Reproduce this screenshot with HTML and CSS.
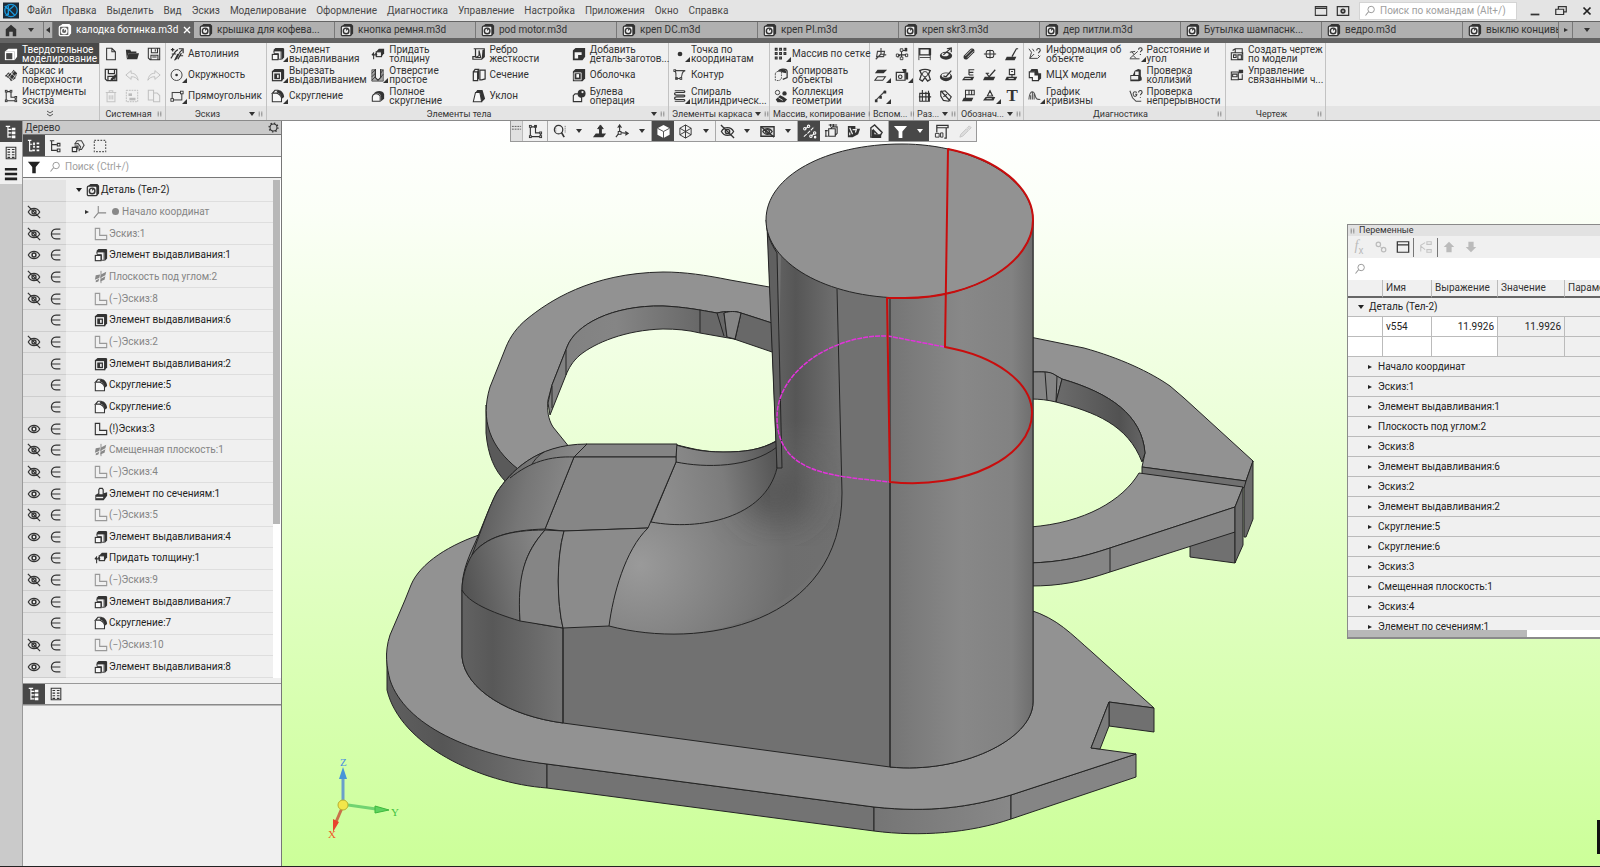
FILE: index.html
```html
<!DOCTYPE html>
<html lang="ru">
<head>
<meta charset="utf-8">
<title>калодка ботинка.m3d</title>
<link rel="stylesheet" href="styles.css">
</head>
<body>
<svg class="defs" aria-hidden="true">
<symbol id="part" viewBox="0 0 16 16"><path d="M2 4l3-3h8l2 2v9l-3 3V4z" fill="#333"/><rect x="1.500" y="3.500" width="11" height="11" rx="1.500" fill="#ececec" stroke="#333" stroke-width="1.400"/><circle cx="7" cy="9" r="3.200" fill="none" stroke="#333" stroke-width="1.600"/><path d="M7 9V6.500h2.500z" fill="#333"/></symbol>
<symbol id="partw" viewBox="0 0 16 16"><path d="M2 4l3-3h8l2 2v9l-3 3V4z" fill="#fff"/><rect x="1.500" y="3.500" width="11" height="11" rx="1.500" fill="#646464" stroke="#fff" stroke-width="1.400"/><circle cx="7" cy="9" r="3.200" fill="none" stroke="#fff" stroke-width="1.600"/><path d="M7 9V6.500h2.500z" fill="#fff"/></symbol>
<symbol id="home" viewBox="0 0 16 16"><path d="M2 15V7l6-5 6 5v8h-4v-5H6v5z" fill="#333"/></symbol>
<symbol id="solid" viewBox="0 0 16 16"><path d="M1 5l4-3h10v9l-3 4V5z" fill="#fff"/><rect x="1" y="5" width="11" height="10" fill="#fff"/><rect x="2.500" y="7" width="7" height="7" fill="#484848"/></symbol>
<symbol id="surf" viewBox="0 0 16 16"><path d="M1 9l4-4 3 1 3-4 4 4-2 6-5 3-2-3z" fill="#333"/><path d="M3 7l7 7M6 4l8 7M5 12l7-9M3 10l5-6M9 14l5-7" stroke="#efefef" stroke-width=".8" fill="none"/></symbol>
<symbol id="skt" viewBox="0 0 16 16"><path d="M2.500 3v10.500h11V9.500H8V3z" fill="none" stroke="#333" stroke-width="1.200"/><g fill="#f0f0f0" stroke="#333"><rect x="1.500" y="1.500" width="2" height="2"/><rect x="7" y="1.500" width="2" height="2"/><rect x="1.500" y="12.500" width="2" height="2"/><rect x="12.500" y="12.500" width="2" height="2"/><rect x="12.500" y="8.500" width="2" height="2"/></g></symbol>
<symbol id="new" viewBox="0 0 16 16"><path d="M3 1.500h6l4 4v9H3zM9 1.500v4h4" fill="none" stroke="#333" stroke-width="1.200"/></symbol>
<symbol id="open" viewBox="0 0 16 16"><path d="M1 3h5l1 2h6v2H4l-2 6z" fill="#333"/><path d="M4 7h12l-2 7H2z" fill="#333"/></symbol>
<symbol id="save" viewBox="0 0 16 16"><path d="M1.500 1.500h13v13h-11l-2-2zM5 1.500v5h7v-5M4.500 14.500v-5h8v5M9.500 2.500v2.500M6 11.500h5" fill="none" stroke="#333" stroke-width="1.200"/></symbol>
<symbol id="saveas" viewBox="0 0 16 16"><path d="M1.500 1.500h13v13h-11l-2-2zM5 1.500v5h7v-5M4.500 14.500v-5h8v5" fill="none" stroke="#333" stroke-width="1.400"/><path d="M7 15l1-3 5-5 2 2-5 5z" fill="#333"/></symbol>
<symbol id="undo" viewBox="0 0 16 16"><path d="M1 8l6-5v3c5 0 7 3 8 8-2-3-4-4-8-4v3z" fill="none" stroke="#bbb"/></symbol>
<symbol id="redo" viewBox="0 0 16 16"><path d="M15 8L9 3v3c-5 0-7 3-8 8 2-3 4-4 8-4v3z" fill="none" stroke="#bbb"/></symbol>
<symbol id="trash" viewBox="0 0 16 16"><path d="M2 4h12M6 4V2h4v2M3.500 4v10.500h9V4M6 7v5M8 7v5M10 7v5" fill="none" stroke="#c4c4c4" stroke-width="1.200"/></symbol>
<symbol id="selbox" viewBox="0 0 16 16"><path d="M1.500 1.500h13v13h-13z" fill="none" stroke="#b8b8b8" stroke-dasharray="2 1"/><rect x="4" y="5" width="4" height="3" fill="#bbb"/><rect x="5" y="10" width="7" height="3" fill="#bbb"/></symbol>
<symbol id="copy" viewBox="0 0 16 16"><path d="M1.500 1.500h6v11h-6zM7.500 4.500h4l3 3v7h-7z" fill="none" stroke="#c0c0c0" stroke-width="1.200"/></symbol>
<symbol id="auto" viewBox="0 0 16 16"><path d="M1 3h4M3 1v4M1 13c3-4 4-8 8-10M5 15c6-3 2-6 9-12M2 8h5M9 8l-3 6M10 2h5v5M11 10h4M9 14l4-7" fill="none" stroke="#333" stroke-width="1.400"/></symbol>
<symbol id="circ" viewBox="0 0 16 16"><circle cx="7.500" cy="8" r="6.300" fill="none" stroke="#444" stroke-width="1.100"/><circle cx="7.500" cy="8" r="1.500" fill="#333"/></symbol>
<symbol id="rect" viewBox="0 0 16 16"><rect x="2.500" y="4" width="11" height="8.500" fill="none" stroke="#444" stroke-width="1.200"/><g fill="#f0f0f0" stroke="#333"><rect x="1" y="11" width="3" height="3"/><rect x="12" y="2.500" width="3" height="3"/></g></symbol>
<symbol id="extr" viewBox="0 0 16 16"><path d="M3 6V3l2-2h9l1 1v10l-3 3V5z" fill="#333"/><path d="M3.500 7.500V4.500h8v9.500h-3v-6.500z" fill="#eee" stroke="#333"/><rect x="1.500" y="8.500" width="6.500" height="6" fill="#f8f8f8" stroke="#333" stroke-width="1.300"/></symbol>
<symbol id="cut" viewBox="0 0 16 16"><path d="M1 4l3-3h10l1 1v10l-3 3z" fill="#333"/><rect x="1.700" y="4" width="10.500" height="10.500" fill="#f0f0f0" stroke="#333" stroke-width="1.400"/><rect x="4.500" y="7" width="5" height="5" fill="#fff" stroke="#333" stroke-width="1.500"/><path d="M4.500 7h2.500v5H4.500z" fill="#333"/></symbol>
<symbol id="fil" viewBox="0 0 16 16"><path d="M1.500 5v9.500h10.500V10C11 7 9 5 5 4.500L1.500 5l3-3.500h4" fill="#f8f8f8" stroke="#333" stroke-width="1.200"/><path d="M6 4l2-3C12 1 15 5 15 9l-3 2.500C12 7.500 10 4 6 4z" fill="#333"/></symbol>
<symbol id="thick" viewBox="0 0 16 16"><path d="M6 5l3-3h6v5l-3 4z" fill="#333"/><rect x="6" y="5.500" width="6" height="5.500" fill="#eee" stroke="#333" stroke-width="1.300"/><path d="M1 9h6M3 6v8M1 9l2-2M7 9L5 7" fill="none" stroke="#333" stroke-width="1.200"/></symbol>
<symbol id="hole" viewBox="0 0 16 16"><path d="M1 2h4v9l3 3 3-3V2h3v13H1z" fill="#aaa" stroke="#555"/><path d="M5 1v10l3 3 3-3V1" fill="#f4f4f4" stroke="#333" stroke-width="1.300"/><path d="M1 6l4-4M1 10l4-4M1 14l4-4M11 6l3-4M11 11l3-4" stroke="#333"/></symbol>
<symbol id="ffil" viewBox="0 0 16 16"><path d="M1.500 14v-5C2 5 8 4 10.500 8v6z" fill="#f8f8f8" stroke="#333" stroke-width="1.200"/><path d="M3 6c2-5 11-5 12 0v5l-3.500 3V9C11 4 6 4 3 6z" fill="#333"/></symbol>
<symbol id="rib" viewBox="0 0 16 16"><path d="M2 2h12v9l-3 3H1v-3h3V2" fill="none" stroke="#333" stroke-width="1.400"/><path d="M8 4v6l-4 2h6z" fill="none" stroke="#333" stroke-width="1.200"/><path d="M12 3h2v8l-3 3z" fill="#333"/></symbol>
<symbol id="sect" viewBox="0 0 16 16"><path d="M1.500 4.500h5v10h-5zM1.500 4.500l2-3h4l-1 3M9 2.500h6v10l-4 1H9z" fill="#f4f4f4" stroke="#333" stroke-width="1.400"/><path d="M6 5l2-3v10l-2 2z" fill="#333"/></symbol>
<symbol id="draft" viewBox="0 0 16 16"><path d="M4 4l2-3h6l3 10-4 4L9 4z" fill="#333"/><path d="M1.500 14.500L4 4h5l2 10.500z" fill="#f8f8f8" stroke="#333" stroke-width="1.200"/></symbol>
<symbol id="addp" viewBox="0 0 16 16"><path d="M1 4l3-3h11v10l-3 4H1z" fill="#333"/><path d="M3 6h4v7H3zM7 6h4v3H7z" fill="#f4f4f4"/></symbol>
<symbol id="shell" viewBox="0 0 16 16"><path d="M1 4l3-3h11v11l-3 3H1z" fill="#333"/><path d="M2.500 5.500h8v8h-8z" fill="none" stroke="#eee"/><path d="M5 7h3v4H5z" fill="#fff"/></symbol>
<symbol id="bool" viewBox="0 0 16 16"><circle cx="11" cy="5" r="4.500" fill="#333"/><path d="M1.500 7.500l2-2H7c0 3 2 4 4 4v5h-9.500z" fill="#f4f4f4" stroke="#333" stroke-width="1.300"/><circle cx="12" cy="3.500" r="1.300" fill="#eee"/></symbol>
<symbol id="point" viewBox="0 0 16 16"><circle cx="8" cy="8" r="2.700" fill="#333"/></symbol>
<symbol id="cont" viewBox="0 0 16 16"><path d="M2 3h12c-5 1-3 6-5 9H4c-2-3 1-5-2-9z" fill="none" stroke="#444" stroke-width="1.200"/><g fill="#f0f0f0" stroke="#333"><rect x="1" y="2" width="2" height="2"/><rect x="3" y="11" width="2" height="2"/><rect x="8" y="11" width="2" height="2"/></g></symbol>
<symbol id="spir" viewBox="0 0 16 16"><path d="M2 2h10c2 0 2 2 0 2H4c-3 0-3 3 0 3h8c2 0 2 2 0 2H4c-3 0-3 3 0 3h8c2 0 2 2 0 2H2" fill="none" stroke="#333" stroke-width="1.400"/></symbol>
<symbol id="arr" viewBox="0 0 16 16"><g fill="none" stroke="#333" stroke-width="1.300"><path d="M1.500 1.500h2v2h-2zM6.500 1.500h2v2h-2zM11.500 1.500h2v2h-2zM1.500 6.500h2v2h-2zM6.500 6.500h2v2h-2zM11.500 6.500h2v2h-2zM1.500 11.500h2v2h-2zM6.500 11.500h2v2h-2z"/></g></symbol>
<symbol id="cpo" viewBox="0 0 16 16"><path d="M1.500 7c0-3 4-4 7-3v7c0 3-3 4-7 3z" fill="none" stroke="#444" stroke-dasharray="2 1"/><path d="M5 4c2-4 10-3 10 0v7l-5 2" fill="none" stroke="#333" stroke-width="1.400"/><path d="M6 3l4-2 4 2v3l-4-1z" fill="#333"/></symbol>
<symbol id="coll" viewBox="0 0 16 16"><circle cx="4" cy="4" r="2.500" fill="none" stroke="#333"/><circle cx="12" cy="5" r="2.500" fill="#333"/><path d="M2 12l5-5 4 2 4 3-3 3H4z" fill="#333"/><path d="M5 10l5 3" stroke="#eee"/></symbol>
<symbol id="a1" viewBox="0 0 16 16"><path d="M4 5h8l-1 6H3zM8 8V1M8 8l6 1M8 8l-6 6" fill="none" stroke="#444" stroke-width="1.300"/></symbol>
<symbol id="a2" viewBox="0 0 16 16"><path d="M7.500 14V3M2 9h12M7 4h5M3 12l3-3" fill="none" stroke="#333" stroke-width="1.200"/><path d="M11 1h3v4h-3z" fill="#333"/><path d="M1.500 8h2.500v3H1.500zM6 11.500h3v3H6zM12 8h2.500v3H12zM6 2h3v3H6z" fill="#f0f0f0" stroke="#333"/></symbol>
<symbol id="a3" viewBox="0 0 16 16"><path d="M4 2h11l-4 4H1z" fill="#333"/><path d="M4 10h9l-3 4H1z" fill="none" stroke="#333" stroke-width="1.200"/></symbol>
<symbol id="a4" viewBox="0 0 16 16"><path d="M1.500 5h10v9h-10z" fill="none" stroke="#333" stroke-width="1.400"/><circle cx="6" cy="10" r="2" fill="none" stroke="#333" stroke-width="1.300"/><path d="M8 1h5v4h-3zM12 5h3v8h-3z" fill="#333"/></symbol>
<symbol id="a5" viewBox="0 0 16 16"><path d="M2 13L13 2" stroke="#444" stroke-width="1.400"/><path d="M1 12h3v3H1zM6 8h3v3H6zM11 2h3v3h-3z" fill="#333"/></symbol>
<symbol id="d1" viewBox="0 0 16 16"><path d="M2 2h11v7H2z" fill="none" stroke="#333" stroke-width="1.500"/><path d="M1 1v14M14 4v11M2 12h12" stroke="#333"/><path d="M13 2l2-1v8l-2 1z" fill="#333"/></symbol>
<symbol id="d2" viewBox="0 0 16 16"><ellipse cx="8" cy="10" rx="7" ry="4.500" fill="#333"/><ellipse cx="7" cy="8.500" rx="4" ry="2" fill="#eee"/><path d="M5 9l9-8M9 2l5-1v5" fill="none" stroke="#333" stroke-width="1.400"/></symbol>
<symbol id="d3" viewBox="0 0 16 16"><path d="M2 3c4-2 8-2 12 0L12 7l2 6-3 2-3-4-3 4-3-2 2-6z" fill="none" stroke="#333" stroke-width="1.500"/><circle cx="8" cy="7" r="3" fill="none" stroke="#333"/></symbol>
<symbol id="d4" viewBox="0 0 16 16"><ellipse cx="8" cy="10" rx="7" ry="5" fill="#333"/><ellipse cx="8" cy="8.500" rx="5" ry="2.500" fill="#eee"/><path d="M5 9l3 1 6-7" fill="none" stroke="#333" stroke-width="1.500"/></symbol>
<symbol id="d5" viewBox="0 0 16 16"><path d="M2 5h11v9H2zM5 1v13M9 3v11M1 9h14M12 2v12" fill="none" stroke="#333" stroke-width="1.300"/></symbol>
<symbol id="d6" viewBox="0 0 16 16"><path d="M2 3l5-1 7 7-3 5-6-1-3-5z" fill="none" stroke="#333" stroke-width="1.300"/><path d="M2 2l11 12M5 9l4-3" stroke="#333" stroke-width="1.300"/></symbol>
<symbol id="n1" viewBox="0 0 16 16"><path d="M2 10l8-8c3-1 5 1 4 4l-8 8c-3 1-5-1-4-4z" fill="#333"/><path d="M4 10l7-7M6 12l7-7" stroke="#ddd"/></symbol>
<symbol id="n2" viewBox="0 0 16 16"><path d="M1 8h14M5 4h6c2 1 2 7 0 8H5c-2-1-2-7 0-8zM8 3v10" fill="none" stroke="#333" stroke-width="1.200"/></symbol>
<symbol id="n3" viewBox="0 0 16 16"><path d="M8 11l5-9h2" fill="none" stroke="#333" stroke-width="1.400"/><path d="M2 11h11l-2 4H0z" fill="#333"/></symbol>
<symbol id="n4" viewBox="0 0 16 16"><path d="M14 2H8v6M8 5h5M8 8h5" fill="none" stroke="#333" stroke-width="1.300"/><path d="M3 10h11l-2 4H0z" fill="#333"/><path d="M3 12h7" stroke="#ddd"/></symbol>
<symbol id="n5" viewBox="0 0 16 16"><path d="M4 6l3 4 7-8M3 6h4" fill="none" stroke="#333" stroke-width="1.400"/><path d="M2 10h12l-2 4H0z" fill="#333"/></symbol>
<symbol id="n6" viewBox="0 0 16 16"><path d="M5 1.500h6v6H5zM8 8v4M7 4h2" fill="none" stroke="#333" stroke-width="1.300"/><path d="M2 10h12l-2 4H0z" fill="#333"/><path d="M4 12h6" stroke="#ddd"/></symbol>
<symbol id="n7" viewBox="0 0 16 16"><path d="M4 1.500h10v5H4zM8 2v5M11 2v5M4 7v4" fill="none" stroke="#333" stroke-width="1.200"/><path d="M2 10h11l-2 4H0z" fill="#333"/></symbol>
<symbol id="n8" viewBox="0 0 16 16"><path d="M8 2l3 6H5zM8 2v-1" fill="none" stroke="#333" stroke-width="1.300"/><path d="M3 9h11l-2 4H0z" fill="#333"/><path d="M4 11h6" stroke="#ddd"/></symbol>
<symbol id="g1" viewBox="0 0 16 16"><path d="M1 2l3 4-2 7h9l3-3M2 13l5-5M5 2l2 3" fill="none" stroke="#444" stroke-width="1.100"/><path d="M10 4c0-3 4-3 4 0 0 1-2 2-2 3M12 9v1" fill="none" stroke="#333" stroke-width="1.200"/></symbol>
<symbol id="g2" viewBox="0 0 16 16"><path d="M4 1h7l1 5h3v6l-3 2.500V8H8V4H2z" fill="#333"/><path d="M1.500 4.500H8V8h4v6.500H5V11H1.500z" fill="#f8f8f8" stroke="#333" stroke-width="1.300"/></symbol>
<symbol id="g3" viewBox="0 0 16 16"><path d="M1 12c1-12 6-10 7-5s3 5 6 5M3 12V7M5 12V3M7 12V5" fill="none" stroke="#555" stroke-width="1.200"/></symbol>
<symbol id="g4" viewBox="0 0 16 16"><path d="M1 13l9-8M1 13.500h11M1 6l6-1M5 10l3 3M3 5l3 4" fill="none" stroke="#444" stroke-width="1.100"/><path d="M11 3c0-3 4-3 4 0 0 1-2 2-2 3M13 8v1" fill="none" stroke="#333" stroke-width="1.200"/></symbol>
<symbol id="g5" viewBox="0 0 16 16"><path d="M1.500 8h3l2-5 4-2 3 1v7l1 2v3l-3 1h-10z" fill="#333"/><path d="M2.500 9h8v4h-8zM7 4h4v4H7z" fill="#eee"/></symbol>
<symbol id="g6" viewBox="0 0 16 16"><path d="M1 2l3 8 4 4h6M9 4c-3-2-5 0-4 3 1 2 4 2 4-1H7" fill="none" stroke="#444" stroke-width="1.200"/><path d="M11 4c0-3 4-3 4 0 0 1-2 2-2 3M13 9v1" fill="none" stroke="#333" stroke-width="1.200"/></symbol>
<symbol id="h1" viewBox="0 0 16 16"><path d="M1.500 6.500h13v8h-13zM4 9h3v3H4zM9 9h4v5H9zM6 6V2h8v6M3 4l3-2" fill="none" stroke="#333" stroke-width="1.200"/></symbol>
<symbol id="h2" viewBox="0 0 16 16"><path d="M1.500 4.500h8v9h-8zM3 7h5v3H3zM9 13h5V7" fill="none" stroke="#333" stroke-width="1.200"/><path d="M10 2h5v4h-5z" fill="#333"/></symbol>
<symbol id="eye" viewBox="0 0 16 16"><path d="M1.500 8c3-5.500 10-5.500 13 0-3 5.500-10 5.500-13 0z" fill="none" stroke="#333" stroke-width="1.400"/><circle cx="8" cy="8" r="2.200" fill="#eee" stroke="#333" stroke-width="1.700"/></symbol>
<symbol id="off" viewBox="0 0 16 16"><path d="M1.500 8c3-5.500 10-5.500 13 0-3 5.500-10 5.500-13 0zM1 1l14 14" fill="none" stroke="#333" stroke-width="1.400"/><circle cx="8" cy="8" r="2.300" fill="none" stroke="#333" stroke-width="1.500"/></symbol>
<symbol id="el" viewBox="0 0 16 16"><path d="M13 2.500H8c-7 0-7 11 0 11h5M3 8h10" fill="none" stroke="#333" stroke-width="1.400"/></symbol>
<symbol id="lg" viewBox="0 0 16 16"><path d="M1.500 1.500h5v8h8v5h-13z" fill="none" stroke="#999" stroke-width="1.300"/></symbol>
<symbol id="ld" viewBox="0 0 16 16"><path d="M1.500 1.500h5v8h8v5h-13z" fill="none" stroke="#333" stroke-width="1.300"/></symbol>
<symbol id="plane" viewBox="0 0 16 16"><path d="M2 6l5-1-1 4-5 2zM8 5l6-3-1 4-6 3zM2 12l4-2-1 3-3 1zM8 10l5-3-1 4-5 2z" fill="#888"/><path d="M8 1v14" stroke="#888"/></symbol>
<symbol id="loft" viewBox="0 0 16 16"><path d="M1.500 9L5 7h6l4-1v4l-4 5H1.500z" fill="#333"/><path d="M5.500 9V3l1-1.500h3L10.500 3v6z" fill="#f0f0f0" stroke="#333" stroke-width="1.300"/><path d="M2.500 12h8" stroke="#eee" stroke-width="1.600"/></symbol>
<symbol id="axes" viewBox="0 0 16 16"><path d="M6 1v8h9M6 9l-5 6" fill="none" stroke="#888" stroke-width="1.200"/></symbol>
<symbol id="mag" viewBox="0 0 16 16"><circle cx="9.500" cy="6" r="4.300" fill="none" stroke="#999" stroke-width="1.300"/><path d="M6 9l-4 5" stroke="#999" stroke-width="1.400"/></symbol>
<symbol id="fun" viewBox="0 0 16 16"><path d="M1 2h14l-5 6v7H6V8z" fill="currentColor"/></symbol>
<symbol id="tree1" viewBox="0 0 16 16"><path d="M2 1.500h5M4.500 2v12.500M4.500 5h4M4.500 9h4M4.500 13.500h4" fill="none" stroke="currentColor" stroke-width="1.300"/><path d="M9 3h4v3H9zM9 7.500h4v3H9zM9 12h4v3H9z" fill="currentColor"/></symbol>
<symbol id="tree2" viewBox="0 0 16 16"><path d="M1 1.500h4M3 2v11.500h3M3 6h3" fill="none" stroke="currentColor" stroke-width="1.300"/><path d="M7 4h2v3H7zM7 8h2v2H7zM6 12h3v2H6zM11 4h3v2h-3zM11 8h3v2h-3zM11 12h3v2h-3z" fill="currentColor"/></symbol>
<symbol id="tree3" viewBox="0 0 16 16"><path d="M1 2h5M3 2v11h6M3 6.500h6" fill="none" stroke="currentColor" stroke-width="1.300"/><path d="M9.500 5h3v3h-3zM9.500 11.500h3v3h-3z" fill="none" stroke="currentColor" stroke-width="1.200"/></symbol>
<symbol id="list" viewBox="0 0 16 16"><path d="M2.500 1.500h11v13h-11z" fill="none" stroke="#333" stroke-width="1.200"/><path d="M4 4h3M9 4h3M4 7h3M9 7h3M4 10h3M9 10h3M4 13h3M9 13h3" stroke="#333" stroke-width="1.400"/></symbol>
<symbol id="menu3" viewBox="0 0 16 16"><path d="M1 1h14v3H1zM1 6.500h14v3H1zM1 12h14v3H1z" fill="#222"/></symbol>
<symbol id="comp" viewBox="0 0 16 16"><path d="M4 6l3-4h5l3 5-3 5H9M4 6l4-1 3 4-2 5" fill="none" stroke="#444" stroke-width="1.200"/><path d="M1.500 9.500h5v5h-5zM4 8h4v4" fill="none" stroke="#333" stroke-width="1.300"/></symbol>
<symbol id="dash" viewBox="0 0 16 16"><rect x="1.500" y="1.500" width="13" height="13" fill="none" stroke="#555" stroke-width="1.300" stroke-dasharray="2 1.500"/></symbol>
<symbol id="gear" viewBox="0 0 16 16"><circle cx="8" cy="8" r="5" fill="none" stroke="#333" stroke-width="1.500"/><circle cx="8" cy="8" r="6.400" fill="none" stroke="#333" stroke-width="2" stroke-dasharray="2 3"/></symbol>
<symbol id="zm" viewBox="0 0 16 16"><circle cx="7" cy="6" r="4.500" fill="none" stroke="#333" stroke-width="1.300"/><path d="M10 9l3 5" stroke="#333" stroke-width="1.800"/><path d="M14 2v8M4 2v8" stroke="#555" stroke-dasharray="1 1"/></symbol>
<symbol id="norm" viewBox="0 0 16 16"><path d="M4 10h11l-3 4H1z" fill="#333"/><path d="M8 11V5H6l3-4 3 4h-2v6z" fill="#333" stroke="#333"/></symbol>
<symbol id="lcs" viewBox="0 0 16 16"><path d="M6 9V2M6 9l8 1M6 9l-4 5M4 4l2-3 2 3M12 8l3 2-3 2" fill="none" stroke="#333" stroke-width="1.200"/><rect x="4.500" y="8" width="3" height="3" fill="#eee" stroke="#333"/></symbol>
<symbol id="cube" viewBox="0 0 16 16"><path d="M1.500 4.500L8 1l6.500 3.500v7L8 15l-6.500-3.500z" fill="#fff"/><path d="M1.500 4.500L8 8l6.500-3.500M8 8v7" stroke="#484848" fill="none"/></symbol>
<symbol id="wire" viewBox="0 0 16 16"><path d="M2 4.500L8 1l6 3.500v7L8 15l-6-3.500zM2 4.500L8 8l6-3.500M8 8v7M2 11.500L8 8l6 3.500M8 1v7" stroke="#333" fill="none"/></symbol>
<symbol id="boxeye" viewBox="0 0 16 16"><path d="M1 3h14v10H1z" fill="#ddd" stroke="#333" stroke-width="1.500"/><path d="M3 8c2.500-4 7.500-4 10 0-2.500 4-7.500 4-10 0zM1 3l14 11" fill="none" stroke="#333" stroke-width="1.400"/><circle cx="8" cy="8" r="2" fill="none" stroke="#333" stroke-width="1.400"/></symbol>
<symbol id="cons" viewBox="0 0 16 16"><path d="M2 13.500L6 10l7-7" stroke="#fff" stroke-width="1.100" stroke-dasharray="4 1"/><g fill="none" stroke="#fff" stroke-width="1.100"><path d="M3.500 5l3-2M10 12.500l3-2"/><circle cx="3" cy="5" r="1.300"/><circle cx="7" cy="2.500" r="1.300"/><circle cx="13.500" cy="9.500" r="1.300"/><circle cx="9.500" cy="13" r="1.300"/><circle cx="14" cy="14" r=".8"/></g></symbol>
<symbol id="dimb" viewBox="0 0 16 16"><path d="M5 5h7v8H5zM7 5l2-2h5v7l-2 2M5 1h9M7 0v3M10 0v3M1 7h3M1 13h3M2 7v6" fill="none" stroke="#333" stroke-width="1.200"/></symbol>
<symbol id="sb" viewBox="0 0 16 16"><path d="M2 2h8v3h5l-2 6-6 3H2z" fill="#333"/><path d="M4 4l3 7M7 6h4l-1 3M4 9v3" stroke="#eee" fill="none" stroke-width="1.300"/></symbol>
<symbol id="se" viewBox="0 0 16 16"><path d="M2 14V4l4-3 8 8-3 5zM5 12V7l4 4" fill="none" stroke="#333" stroke-width="1.500"/><path d="M5 6v5h8v4H3V6z" fill="#333"/></symbol>
<symbol id="calip" viewBox="0 0 16 16"><path d="M3 1.500h12v2.500H3zM11 4h2v11h-2M3 4v5" fill="none" stroke="#333" stroke-width="1.300"/><path d="M1.500 10h4v4h-4zM7 9.500h2.500V14H7z" fill="none" stroke="#333"/></symbol>
<symbol id="pip" viewBox="0 0 16 16"><path d="M2 14l1-3 6-6 2 2-6 6zM10 4l2-2 2 2-2 2z" fill="#ddd" stroke="#c4c4c4"/></symbol>
<symbol id="grip" viewBox="0 0 8 8"><path d="M1 1h2M5 1h2M1 3h2M5 3h2M1 5h2M5 5h2M1 7h2M5 7h2" stroke="#555"/></symbol>
</svg>

<div class="app">
<header class="menubar">
<svg class="logo" viewBox="0 0 18 18"><rect width="18" height="18" fill="#1d2b38"/><circle cx="9" cy="9" r="7" fill="none" stroke="#1b9be0" stroke-width="1.400"/><path d="M6 4v10M6 9l6-5M7 8l6 6M2 4l3 3M3 15l3-3" stroke="#1b9be0" stroke-width="1.500" fill="none"/></svg>
<nav class="menus"><button>Файл</button><button>Правка</button><button>Выделить</button><button>Вид</button><button>Эскиз</button><button>Моделирование</button><button>Оформление</button><button>Диагностика</button><button>Управление</button><button>Настройка</button><button>Приложения</button><button>Окно</button><button>Справка</button></nav>
<div class="tools">
<button aria-label="Окно"><svg viewBox="0 0 16 16"><path d="M1.500 3h13v10h-13zM1.500 5h13" fill="none" stroke="#333" stroke-width="1.200"/></svg></button>
<button aria-label="Настройки"><svg viewBox="0 0 16 16"><path d="M1.500 3h13v10h-13z" fill="none" stroke="#333" stroke-width="1.400"/><circle cx="8" cy="8" r="2" fill="none" stroke="#333" stroke-width="2"/></svg></button>
<label class="cmd"><svg><use href="#mag"/></svg><input type="text" aria-label="Поиск по командам" placeholder="Поиск по командам (Alt+/)"></label>
<button class="win" aria-label="Свернуть"><svg viewBox="0 0 16 16"><path d="M3 12h10" stroke="#333" stroke-width="2"/></svg></button>
<button class="win" aria-label="Развернуть"><svg viewBox="0 0 16 16"><path d="M2 6h9v6H2zM5 6V3h9v6h-3" fill="none" stroke="#333" stroke-width="1.400"/></svg></button>
<button class="win" aria-label="Закрыть"><svg viewBox="0 0 16 16"><path d="M4 4l8 8M12 4l-8 8" stroke="#222" stroke-width="2"/></svg></button>
</div>
</header>

<nav class="tabs">
<button class="homeb" aria-label="Главная"><svg><use href="#home"/></svg><i class="dn"></i></button>
<button class="step" aria-label="Назад"><i class="lf"></i></button>
<button class="tab on"><svg><use href="#partw"/></svg><span>калодка ботинка.m3d</span><svg class="x" viewBox="0 0 10 10"><path d="M2 2l6 6M8 2L2 8" stroke="#fff" stroke-width="1.400"/></svg></button>
<button class="tab"><svg><use href="#part"/></svg><span>крышка для кофева...</span></button>
<button class="tab"><svg><use href="#part"/></svg><span>кнопка ремня.m3d</span></button>
<button class="tab"><svg><use href="#part"/></svg><span>pod motor.m3d</span></button>
<button class="tab"><svg><use href="#part"/></svg><span>креп DC.m3d</span></button>
<button class="tab"><svg><use href="#part"/></svg><span>креп PI.m3d</span></button>
<button class="tab"><svg><use href="#part"/></svg><span>креп skr3.m3d</span></button>
<button class="tab"><svg><use href="#part"/></svg><span>дер питли.m3d</span></button>
<button class="tab"><svg><use href="#part"/></svg><span>Бутылка шампаснк...</span></button>
<button class="tab"><svg><use href="#part"/></svg><span>ведро.m3d</span></button>
<button class="tab last"><svg><use href="#part"/></svg><span>выклю концивы</span></button>
<button class="step end" aria-label="Вперёд"><i class="rt"></i></button>
<button class="more" aria-label="Список"><i class="dn"></i></button>
</nav>

<section class="ribbon">
<div class="group modes"><div class="cells">
<button class="on"><svg><use href="#solid"/></svg><span>Твердотельное<br>моделирование</span></button>
<button><svg><use href="#surf"/></svg><span>Каркас и<br>поверхности</span></button>
<button><svg><use href="#skt"/></svg><span>Инструменты<br>эскиза</span></button>
</div><footer><svg class="chev" viewBox="0 0 8 8"><path d="M1 1l3 2 3-2M1 4l3 2 3-2" fill="none" stroke="#555"/></svg></footer></div>
<div class="group n3"><div class="cells icons">
<button aria-label="Создать"><svg><use href="#new"/></svg></button><button aria-label="Сохранить как"><svg><use href="#saveas"/></svg></button><button aria-label="Удалить"><svg><use href="#trash"/></svg></button>
<button aria-label="Открыть"><svg><use href="#open"/></svg></button><button aria-label="Отменить"><svg><use href="#undo"/></svg></button><button aria-label="Выделить"><svg><use href="#selbox"/></svg></button>
<button aria-label="Сохранить"><svg><use href="#save"/></svg></button><button aria-label="Повторить"><svg><use href="#redo"/></svg></button><button aria-label="Копировать"><svg><use href="#copy"/></svg></button>
</div><footer><span>Системная</span><svg class="grip"><use href="#grip"/></svg></footer></div>
<div class="group w1"><div class="cells">
<button><svg><use href="#auto"/></svg><span>Автолиния</span></button>
<button class="d"><svg><use href="#circ"/></svg><span>Окружность</span></button>
<button class="d"><svg><use href="#rect"/></svg><span>Прямоугольник</span></button>
</div><footer><span>Эскиз</span><i class="dn"></i><svg class="grip"><use href="#grip"/></svg></footer></div>
<div class="group w4"><div class="cells">
<button class="d"><svg><use href="#extr"/></svg><span>Элемент<br>выдавливания</span></button>
<button class="d"><svg><use href="#cut"/></svg><span>Вырезать<br>выдавливанием</span></button>
<button class="d"><svg><use href="#fil"/></svg><span>Скругление</span></button>
<button><svg><use href="#thick"/></svg><span>Придать<br>толщину</span></button>
<button class="d"><svg><use href="#hole"/></svg><span>Отверстие<br>простое</span></button>
<button><svg><use href="#ffil"/></svg><span>Полное<br>скругление</span></button>
<button><svg><use href="#rib"/></svg><span>Ребро<br>жесткости</span></button>
<button><svg><use href="#sect"/></svg><span>Сечение</span></button>
<button><svg><use href="#draft"/></svg><span>Уклон</span></button>
<button><svg><use href="#addp"/></svg><span>Добавить<br>деталь-заготов...</span></button>
<button><svg><use href="#shell"/></svg><span>Оболочка</span></button>
<button><svg><use href="#bool"/></svg><span>Булева<br>операция</span></button>
</div><footer><span>Элементы тела</span><i class="dn"></i><svg class="grip"><use href="#grip"/></svg></footer></div>
<div class="group w1"><div class="cells">
<button class="d"><svg><use href="#point"/></svg><span>Точка по<br>координатам</span></button>
<button><svg><use href="#cont"/></svg><span>Контур</span></button>
<button class="d"><svg><use href="#spir"/></svg><span>Спираль<br>цилиндрическ...</span></button>
</div><footer><span>Элементы каркаса</span><i class="dn"></i><svg class="grip"><use href="#grip"/></svg></footer></div>
<div class="group w0"><div class="cells">
<button class="d"><svg><use href="#arr"/></svg><span>Массив по сетке</span></button>
<button><svg><use href="#cpo"/></svg><span>Копировать<br>объекты</span></button>
<button><svg><use href="#coll"/></svg><span>Коллекция<br>геометрии</span></button>
</div><footer><span>Массив, копирование</span><svg class="grip"><use href="#grip"/></svg></footer></div>
<div class="group n2"><div class="cells icons">
<button aria-label="Система координат"><svg><use href="#a1"/></svg></button><button class="d" aria-label="Плоскость"><svg><use href="#a3"/></svg></button><button class="d" aria-label="Ось"><svg><use href="#a5"/></svg></button>
<button aria-label="Структура"><svg><use href="#a2"/></svg></button><button class="d" aria-label="Вид"><svg><use href="#a4"/></svg></button>
</div><footer><span>Вспом...</span><svg class="grip"><use href="#grip"/></svg></footer></div>
<div class="group n2"><div class="cells icons">
<button aria-label="Линейный размер"><svg><use href="#d1"/></svg></button><button aria-label="Угловой размер"><svg><use href="#d3"/></svg></button><button aria-label="Размер по сетке"><svg><use href="#d5"/></svg></button>
<button aria-label="Диаметр"><svg><use href="#d2"/></svg></button><button aria-label="Радиус"><svg><use href="#d4"/></svg></button><button aria-label="Размер"><svg><use href="#d6"/></svg></button>
</div><footer><span>Раз...</span><i class="dn"></i><svg class="grip"><use href="#grip"/></svg></footer></div>
<div class="group n3"><div class="cells icons">
<button aria-label="Резьба"><svg><use href="#n1"/></svg></button><button aria-label="База"><svg><use href="#n4"/></svg></button><button aria-label="Таблица"><svg><use href="#n7"/></svg></button>
<button aria-label="Осевая"><svg><use href="#n2"/></svg></button><button aria-label="Шероховатость"><svg><use href="#n5"/></svg></button><button class="d" aria-label="Знак"><svg><use href="#n8"/></svg></button>
<button aria-label="Выноска"><svg><use href="#n3"/></svg></button><button aria-label="Клеймо"><svg><use href="#n6"/></svg></button><button class="tt" aria-label="Текст">T</button>
</div><footer><span>Обознач...</span><i class="dn"></i><svg class="grip"><use href="#grip"/></svg></footer></div>
<div class="group w2"><div class="cells">
<button><svg><use href="#g1"/></svg><span>Информация об<br>объекте</span></button>
<button><svg><use href="#g2"/></svg><span>МЦХ модели</span></button>
<button class="d"><svg><use href="#g3"/></svg><span>График<br>кривизны</span></button>
<button class="d"><svg><use href="#g4"/></svg><span>Расстояние и<br>угол</span></button>
<button><svg><use href="#g5"/></svg><span>Проверка<br>коллизий</span></button>
<button><svg><use href="#g6"/></svg><span>Проверка<br>непрерывности</span></button>
</div><footer><span>Диагностика</span><svg class="grip"><use href="#grip"/></svg></footer></div>
<div class="group w0"><div class="cells">
<button><svg><use href="#h1"/></svg><span>Создать чертеж<br>по модели</span></button>
<button><svg><use href="#h2"/></svg><span>Управление<br>связанными ч...</span></button>
</div><footer><span>Чертеж</span><svg class="grip"><use href="#grip"/></svg></footer></div>
<div class="group rest"><div class="cells"></div><footer></footer></div>
</section>

<main class="work">
<aside class="strip"><button class="on" aria-label="Дерево"><svg><use href="#tree1"/></svg></button><button aria-label="Параметры"><svg><use href="#list"/></svg></button><button aria-label="Слои"><svg><use href="#menu3"/></svg></button></aside>
<section class="side">
<h2>Дерево<svg><use href="#gear"/></svg></h2>
<div class="sbar"><button class="on" aria-label="Структура"><svg><use href="#tree2"/></svg></button><button aria-label="Состав"><svg><use href="#tree3"/></svg></button><button aria-label="Компоненты"><svg><use href="#comp"/></svg></button><button aria-label="Область"><svg><use href="#dash"/></svg></button></div>
<label class="find"><svg class="fn"><use href="#fun"/></svg><svg><use href="#mag"/></svg><input type="text" aria-label="Поиск" placeholder="Поиск (Ctrl+/)"></label>
<div class="treebox">
<ul class="tree">
<li class="root"><b></b><b></b><p><i class="dn"></i><svg><use href="#part"/></svg>Деталь (Тел-2)</p></li>
<li class="org g"><b><svg><use href="#off"/></svg></b><b></b><p><i class="rt"></i><svg><use href="#axes"/></svg><em></em>Начало координат</p></li>
<li class="g"><b><svg><use href="#off"/></svg></b><b><svg><use href="#el"/></svg></b><p><svg><use href="#lg"/></svg>Эскиз:1</p></li>
<li><b><svg><use href="#eye"/></svg></b><b><svg><use href="#el"/></svg></b><p><svg><use href="#extr"/></svg>Элемент выдавливания:1</p></li>
<li class="g"><b><svg><use href="#off"/></svg></b><b><svg><use href="#el"/></svg></b><p><svg><use href="#plane"/></svg>Плоскость под углом:2</p></li>
<li class="g"><b><svg><use href="#off"/></svg></b><b><svg><use href="#el"/></svg></b><p><svg><use href="#lg"/></svg>(−)Эскиз:8</p></li>
<li><b></b><b><svg><use href="#el"/></svg></b><p><svg><use href="#cut"/></svg>Элемент выдавливания:6</p></li>
<li class="g"><b><svg><use href="#off"/></svg></b><b><svg><use href="#el"/></svg></b><p><svg><use href="#lg"/></svg>(−)Эскиз:2</p></li>
<li><b></b><b><svg><use href="#el"/></svg></b><p><svg><use href="#cut"/></svg>Элемент выдавливания:2</p></li>
<li><b></b><b><svg><use href="#el"/></svg></b><p><svg><use href="#fil"/></svg>Скругление:5</p></li>
<li><b></b><b><svg><use href="#el"/></svg></b><p><svg><use href="#fil"/></svg>Скругление:6</p></li>
<li><b><svg><use href="#eye"/></svg></b><b><svg><use href="#el"/></svg></b><p><svg><use href="#ld"/></svg>(!)Эскиз:3</p></li>
<li class="g"><b><svg><use href="#off"/></svg></b><b><svg><use href="#el"/></svg></b><p><svg><use href="#plane"/></svg>Смещенная плоскость:1</p></li>
<li class="g"><b><svg><use href="#off"/></svg></b><b><svg><use href="#el"/></svg></b><p><svg><use href="#lg"/></svg>(−)Эскиз:4</p></li>
<li><b><svg><use href="#eye"/></svg></b><b><svg><use href="#el"/></svg></b><p><svg><use href="#loft"/></svg>Элемент по сечениям:1</p></li>
<li class="g"><b><svg><use href="#off"/></svg></b><b><svg><use href="#el"/></svg></b><p><svg><use href="#lg"/></svg>(−)Эскиз:5</p></li>
<li><b><svg><use href="#eye"/></svg></b><b><svg><use href="#el"/></svg></b><p><svg><use href="#extr"/></svg>Элемент выдавливания:4</p></li>
<li><b><svg><use href="#eye"/></svg></b><b><svg><use href="#el"/></svg></b><p><svg><use href="#thick"/></svg>Придать толщину:1</p></li>
<li class="g"><b><svg><use href="#off"/></svg></b><b><svg><use href="#el"/></svg></b><p><svg><use href="#lg"/></svg>(−)Эскиз:9</p></li>
<li><b><svg><use href="#eye"/></svg></b><b><svg><use href="#el"/></svg></b><p><svg><use href="#extr"/></svg>Элемент выдавливания:7</p></li>
<li><b></b><b><svg><use href="#el"/></svg></b><p><svg><use href="#fil"/></svg>Скругление:7</p></li>
<li class="g"><b><svg><use href="#off"/></svg></b><b><svg><use href="#el"/></svg></b><p><svg><use href="#lg"/></svg>(−)Эскиз:10</p></li>
<li><b><svg><use href="#eye"/></svg></b><b><svg><use href="#el"/></svg></b><p><svg><use href="#extr"/></svg>Элемент выдавливания:8</p></li>
</ul>
<div class="scroll"><div class="thumb"></div></div>
</div>
<div class="sbar low"><button class="on" aria-label="Дерево"><svg><use href="#tree1"/></svg></button><button aria-label="Свойства"><svg><use href="#list"/></svg></button></div>
<div class="blank"></div>
</section>

<section class="view">
<svg class="scene" viewBox="282 121 1318 745" preserveAspectRatio="xMinYMin slice">
<defs>
<linearGradient id="cyl" x1="890" x2="1033" y1="0" y2="0" gradientUnits="userSpaceOnUse"><stop offset="0" stop-color="#757575"/><stop offset=".5" stop-color="#888"/><stop offset=".85" stop-color="#828282"/><stop offset="1" stop-color="#6e6e6e"/></linearGradient>
<linearGradient id="neck" x1="776" x2="842" y1="0" y2="0" gradientUnits="userSpaceOnUse"><stop offset="0" stop-color="#626262"/><stop offset=".3" stop-color="#565656"/><stop offset="1" stop-color="#727272"/></linearGradient>
<linearGradient id="fade" x1="0" x2="0" y1="420" y2="540" gradientUnits="userSpaceOnUse"><stop offset="0" stop-color="#fff"/><stop offset=".4" stop-color="#999"/><stop offset="1" stop-color="#000"/></linearGradient>
<mask id="neckfade" maskUnits="userSpaceOnUse" x="760" y="240" width="100" height="310"><rect x="760" y="240" width="100" height="310" fill="url(#fade)"/></mask>
<linearGradient id="heel" x1="462" x2="563" y1="0" y2="0" gradientUnits="userSpaceOnUse"><stop offset="0" stop-color="#626262"/><stop offset=".3" stop-color="#585858"/><stop offset="1" stop-color="#757575"/></linearGradient>
<linearGradient id="rim" x1="386" x2="547" y1="0" y2="0" gradientUnits="userSpaceOnUse"><stop offset="0" stop-color="#5f5f5f"/><stop offset=".35" stop-color="#565656"/><stop offset="1" stop-color="#747474"/></linearGradient>
<linearGradient id="rim2" x1="874" x2="1010" y1="0" y2="0" gradientUnits="userSpaceOnUse"><stop offset="0" stop-color="#757575"/><stop offset="1" stop-color="#888"/></linearGradient>
<linearGradient id="wall" x1="560" x2="700" y1="0" y2="0" gradientUnits="userSpaceOnUse"><stop offset="0" stop-color="#818181"/><stop offset=".4" stop-color="#858585"/><stop offset="1" stop-color="#686868"/></linearGradient>
<linearGradient id="wall2" x1="1060" x2="1145" y1="0" y2="0" gradientUnits="userSpaceOnUse"><stop offset="0" stop-color="#6a6a6a"/><stop offset=".7" stop-color="#525252"/><stop offset="1" stop-color="#666"/></linearGradient>
<linearGradient id="toeL" x1="475" y1="490" x2="570" y2="510" gradientUnits="userSpaceOnUse"><stop offset="0" stop-color="#575757"/><stop offset=".5" stop-color="#767676"/><stop offset="1" stop-color="#8a8a8a"/></linearGradient>
<linearGradient id="toeB" x1="464" y1="590" x2="570" y2="565" gradientUnits="userSpaceOnUse"><stop offset="0" stop-color="#525252"/><stop offset=".5" stop-color="#767676"/><stop offset="1" stop-color="#929292"/></linearGradient>
<linearGradient id="toeR" x1="660" y1="490" x2="775" y2="470" gradientUnits="userSpaceOnUse"><stop offset="0" stop-color="#8e8e8e"/><stop offset=".55" stop-color="#7c7c7c"/><stop offset="1" stop-color="#575757"/></linearGradient>
<radialGradient id="inst" cx="640" cy="565" r="210" gradientUnits="userSpaceOnUse"><stop offset="0" stop-color="#9a9a9a"/><stop offset=".35" stop-color="#848484"/><stop offset=".7" stop-color="#6e6e6e"/><stop offset="1" stop-color="#707070"/></radialGradient>
<filter id="soft" x="-50%" y="-50%" width="200%" height="200%"><feGaussianBlur stdDeviation="18"/></filter>
<clipPath id="ic"><path d="M648 528L651 522C700 531 765 518 777 468L781 254L837 289L842 493C842 575 765 634 670 634C648 634 628 631 609 626C613 595 625 550 648 528z"/></clipPath>
</defs>
<g stroke="#242424" stroke-width="1" stroke-linejoin="round">
<path d="M486 405V433C488 455 494 470 506 482L520 470z" fill="#5a5a5a"/>
<path d="M775 288L730 280C705 275 685 272 663 272C590 273 548 302 527 319C517 327 510 337 506 347L490 387C480 420 490 447 518 469L570 448L553 427C548 419 547 410 548 400L552 385L567 347C575 325 612 305 663 306C685 307 700 310 717 313C725 311 735 311 741 313L775 324z" fill="#929292"/>
<path d="M548 403L552 385L567 347C575 325 612 305 663 306C685 307 700 310 717 313C725 311 735 311 741 313L775 324V353L734 339L700 333C688 330 676 329 663 329C625 330 595 343 580 355C572 362 569 368 566 375L550 415z" fill="url(#wall)"/>
<path d="M700 310v23M717 313l7 23M724 313l3 24M741 313l-6 27M566 350v25M552 386v22" fill="none"/>
<path d="M724 313C730 311 735 311 741 313L735 339L727 337z" fill="#858585"/>
<path d="M1030 337L1084 348C1120 358 1150 372 1170 386L1184 398L1253 461L1246 481L1142 467L1145 453C1142 415 1110 393 1062 379L1055 375C1048 371 1042 372 1030 372z" fill="#929292"/>
<path d="M1030 372C1042 372 1050 371 1055 375L1062 379L1056 402C1048 400 1040 399 1030 399z" fill="#858585"/>
<path d="M1062 379C1110 393 1142 415 1145 453L1142 462C1128 425 1095 412 1056 402z" fill="url(#wall2)"/>
<path d="M1045 372l2 28M1057 376l-1 26" fill="none"/>
<path d="M1142 467L1246 481V488L1142 474z" fill="#707070"/>
<path d="M1246 481L1253 461V519L1246 537H1244V488z" fill="#6c6c6c"/>
<path d="M1190 545V557L1235 563V525z" fill="#707070"/>
<path d="M1030 527C1085 523 1123 500 1139 473L1243 487L1235 507L1110 548C1080 558 1060 562 1030 563z" fill="#929292"/>
<path d="M1030 563C1060 562 1080 558 1110 548L1235 507V532L1110 572C1080 582 1060 586 1030 586z" fill="#858585"/>
<path d="M1235 507L1243 487V545L1235 563z" fill="#6c6c6c"/><path d="M1110 548v24"/>
<path d="M387 653V690C400 745 480 783 547 788V764C460 752 391 710 387 653z" fill="url(#rim)"/>
<path d="M547 764L874 807V831L547 788z" fill="#737373"/>
<path d="M874 807C930 813 970 807 1011 795V819C970 833 920 837 874 831z" fill="url(#rim2)"/>
<path d="M1011 795L1136 754V777L1011 819z" fill="#858585"/>
<path d="M485 533C450 544 420 563 411 585L405 600L390 635C384 653 387 668 390 680C405 725 470 755 547 764L874 807C930 813 970 807 1011 795L1136 754L1091 748L1109 702L1154 708L1093 653C1070 633 1058 619 1030 610L800 560z" fill="#929292"/>
<path d="M1109 702L1154 708V732L1109 726z" fill="#707070"/><path d="M1109 702V726L1100 749L1091 748z" fill="#7c7c7c"/>
<path d="M766 220L768 233L776 441C760 450 745 452 723 452C703 452 690 448 677 445H587C535 444 510 473 497 492C490 505 483 525 475 543C466 562 462 575 462 590V657C465 690 510 716 563 723L890 767C960 774 1033 740 1033 702V220z" fill="#717171"/>
<path d="M890 297L1033 220V702C1033 740 960 774 890 767z" fill="url(#cyl)"/>
<path d="M462 590C473 605 510 621 563 628V723C510 716 465 690 462 657z" fill="url(#heel)"/>
</g>
<g clip-path="url(#ic)"><rect x="600" y="240" width="250" height="400" fill="url(#inst)"/><ellipse cx="776" cy="490" rx="32" ry="28" fill="#505050" filter="url(#soft)"/><rect x="770" y="240" width="80" height="310" fill="url(#neck)" mask="url(#neckfade)"/></g>
<g stroke="#242424" stroke-width="1" stroke-linejoin="round" fill="none">
<path d="M676 445C690 449 703 452 723 452C745 452 760 450 777 441V468C765 518 700 531 651 522L676 462z" fill="url(#toeR)"/>
<path d="M587 444H677L676 457H574C577 450 581 446 587 444z" fill="#848484"/>
<path d="M574 457H676V462L648 528L564 531L545 529z" fill="#868686"/>
<path d="M587 444C535 444 510 473 497 492C490 505 483 525 472 555C485 537 510 530 545 529L574 457z" fill="url(#toeL)"/>
<path d="M472 555C485 537 510 530 545 530C525 553 519 570 520 621C490 612 468 602 462 590C462 578 466 565 472 555z" fill="url(#toeB)"/>
<path d="M545 530L564 531C556 560 557 603 563 628L520 621C517 575 525 553 545 530z" fill="#858585"/>
<path d="M564 531L648 528C625 550 613 595 609 626L563 628C557 603 556 560 564 531z" fill="#8b8b8b"/>
<path d="M609 626C700 650 842 625 842 493L837 289M563 628V723M510 478C530 462 550 456 574 457M532 464C536 458 539 455 544 452M676 462C705 468 750 468 777 447M890 482V767"/>
<path d="M767 226L777 468H782L777 253C770 242 767 234 767 226z" fill="#606060"/>
<path d="M766 220C766 176 826 144 902 144C975 144 1033 180 1033 220C1033 262 975 298 905 298C825 298 766 262 766 220z" fill="#929292"/>
<path d="M945 347L888 336C835 334 777 370 777 417C777 475 835 476 890 482" stroke="#e333dc" stroke-width="1.500" stroke-dasharray="5 1"/>
<path d="M948 149C997 159 1033 187 1033 220C1033 262 975 298 905 298H887L890 482C965 490 1032 457 1032 413C1032 382 995 356 945 347z" stroke="#c90d0d" stroke-width="2"/>
</g>
<g stroke-width="3" fill="none"><path d="M343 802V778" stroke="#6a9fca"/><path d="M348 805L376 809" stroke="#71d471"/><path d="M342 808L336 822" stroke="#c9714a"/></g>
<circle cx="343" cy="805" r="5" fill="#f2e64a" stroke="#b9b030"/>
<path d="M343 767l4 12h-8z" fill="#4595d8"/><path d="M389 810l-14-4v7z" fill="#5fd35f" stroke="#3db83d"/><path d="M333 832l0-13 6 3z" fill="#e8442e"/>
<g class="axis"><text x="340" y="766" fill="#4a8fe0">Z</text><text x="391" y="816" fill="#3fbf3f">Y</text><text x="328" y="838" fill="#f05a28">X</text></g>
</svg>

<div class="vbar">
<svg class="hand" viewBox="0 0 12 20"><path d="M1 5h10M1 8h10" stroke="#555" stroke-dasharray="2 1"/></svg>
<button class="s w" aria-label="Эскиз"><svg><use href="#skt"/></svg></button>
<button aria-label="Масштаб"><svg><use href="#zm"/></svg></button><button class="ar" aria-label="Ещё"><i class="dn"></i></button>
<button aria-label="Нормально к"><svg><use href="#norm"/></svg></button>
<button aria-label="Ориентация"><svg><use href="#lcs"/></svg></button><button class="ar s" aria-label="Ещё"><i class="dn"></i></button>
<button class="on" aria-label="Полутоновое"><svg><use href="#cube"/></svg></button>
<button aria-label="Каркас"><svg><use href="#wire"/></svg></button><button class="ar s" aria-label="Ещё"><i class="dn"></i></button>
<button aria-label="Скрыть"><svg><use href="#off"/></svg></button><button class="ar" aria-label="Ещё"><i class="dn"></i></button>
<button aria-label="Показать"><svg><use href="#boxeye"/></svg></button><button class="ar s" aria-label="Ещё"><i class="dn"></i></button>
<button class="on" aria-label="Ограничения"><svg><use href="#cons"/></svg></button>
<button aria-label="Размеры"><svg><use href="#dimb"/></svg></button>
<button aria-label="Сечение"><svg><use href="#sb"/></svg></button>
<button class="s w" aria-label="Упрощение"><svg><use href="#se"/></svg></button>
<button class="on" aria-label="Фильтр"><svg><use href="#fun"/></svg></button><button class="ar on" aria-label="Ещё"><i class="dn"></i></button>
<button class="w" aria-label="Измерить"><svg><use href="#calip"/></svg></button>
<button aria-label="Пипетка"><svg><use href="#pip"/></svg></button>
</div>

<section class="vars">
<h3><svg><use href="#grip"/></svg>Переменные</h3>
<div class="vtools"><button class="fx" aria-label="Функция"><i>f</i><sub>x</sub></button><button aria-label="Ссылка"><svg viewBox="0 0 16 16"><circle cx="5" cy="5" r="2.500" fill="none" stroke="#bbb" stroke-width="1.400"/><circle cx="11" cy="11" r="2.500" fill="none" stroke="#bbb" stroke-width="1.400"/><path d="M6 7l4 3" stroke="#bbb"/></svg></button><button class="s" aria-label="Таблица"><svg viewBox="0 0 16 16"><path d="M1.500 2h13v12h-13zM1.500 5.500h13" fill="none" stroke="#333" stroke-width="1.400"/></svg></button><button class="s w" aria-label="Связи"><svg viewBox="0 0 16 16"><path d="M2 13V6l5-3M9 2h5v3H9zM9 11h5v3H9zM2 7l5 4" fill="none" stroke="#c4c4c4" stroke-width="1.200"/></svg></button><button aria-label="Вверх"><svg viewBox="0 0 16 16"><path d="M8 2l6 6h-3v6H5V8H2z" fill="#bbb"/></svg></button><button aria-label="Вниз"><svg viewBox="0 0 16 16"><path d="M8 14l6-6h-3V2H5v6H2z" fill="#bbb"/></svg></button></div>
<label class="vfind"><svg><use href="#mag"/></svg><input type="text" aria-label="Поиск переменной"></label>
<div class="vbody"><table>
<colgroup><col class="c1"><col class="c2"><col class="c3"><col class="c4"><col class="c5"></colgroup>
<thead><tr><th></th><th>Имя</th><th>Выражение</th><th>Значение</th><th>Параметр</th></tr></thead>
<tbody>
<tr class="top"><td colspan="5"><i class="dn"></i>Деталь (Тел-2)</td></tr>
<tr class="v"><td></td><td>v554</td><td>11.9926</td><td>11.9926</td><td></td></tr>
<tr class="v"><td></td><td></td><td></td><td></td><td></td></tr>
<tr><td colspan="5"><i class="rt"></i>Начало координат</td></tr>
<tr><td colspan="5"><i class="rt"></i>Эскиз:1</td></tr>
<tr><td colspan="5"><i class="rt"></i>Элемент выдавливания:1</td></tr>
<tr><td colspan="5"><i class="rt"></i>Плоскость под углом:2</td></tr>
<tr><td colspan="5"><i class="rt"></i>Эскиз:8</td></tr>
<tr><td colspan="5"><i class="rt"></i>Элемент выдавливания:6</td></tr>
<tr><td colspan="5"><i class="rt"></i>Эскиз:2</td></tr>
<tr><td colspan="5"><i class="rt"></i>Элемент выдавливания:2</td></tr>
<tr><td colspan="5"><i class="rt"></i>Скругление:5</td></tr>
<tr><td colspan="5"><i class="rt"></i>Скругление:6</td></tr>
<tr><td colspan="5"><i class="rt"></i>Эскиз:3</td></tr>
<tr><td colspan="5"><i class="rt"></i>Смещенная плоскость:1</td></tr>
<tr><td colspan="5"><i class="rt"></i>Эскиз:4</td></tr>
<tr><td colspan="5"><i class="rt"></i>Элемент по сечениям:1</td></tr>
</tbody></table></div>
<div class="hscroll"><div class="hthumb"></div></div>
</section>
<div class="edge"></div>
</section>
</main>
</div>
</body>
</html>
```

FILE: styles.css
```css
* { box-sizing: border-box; }
body { margin: 0; font: 10px/14px Roboto, "Noto Sans", sans-serif; color: #333; background: #222; }
button, input { font: inherit; color: inherit; border: 0; padding: 0; margin: 0; background: none; }
input { outline: 0; min-width: 0; }
input::placeholder { color: #a0a0a0; opacity: 1; }
svg { display: block; width: 14px; height: 14px; flex: none; }
.defs { position: absolute; width: 0; height: 0; }
.dn, .rt, .lf { display: block; width: 0; height: 0; flex: none; border: 3px solid transparent; }
.dn { border-width: 4px 3px 0; border-top-color: currentColor; }
.rt { border-width: 2px 0 2px 4px; border-left-color: currentColor; }
.lf { border-width: 3px 4px 3px 0; border-right-color: currentColor; }
.app { display: flex; flex-direction: column; height: 100vh; padding-bottom: 1px; overflow: hidden; }

.menubar { display: flex; align-items: center; height: 21px; background: #e4e4e4; padding-left: 3px; flex: none; }
.logo { width: 16px; height: 17px; }
.menus { display: flex; gap: 10px; margin-left: 8px; flex: 1; white-space: nowrap; color: #484848; }
.tools { display: flex; align-items: center; }
.tools button { width: 22px; display: grid; place-items: center; }
.tools button.win { width: 26px; }
.cmd { display: flex; align-items: center; gap: 4px; width: 158px; height: 18px; margin: 0 5px; padding: 0 4px; background: #fff; border: 1px solid #d4d4d4; }
.cmd svg { width: 12px; height: 12px; }
.cmd input { flex: 1; }

.tabs { display: flex; height: 22px; background: #646464; border-top: 1px solid #646464; border-bottom: 5px solid #646464; flex: none; }
.tabs button { background: #b0b0b0; border-right: 1px solid #787878; display: flex; align-items: center; }
.tabs .homeb { width: 44px; gap: 10px; padding-left: 4px; }
.tabs .step { width: 9px; padding-left: 2px; }
.tabs .tab { width: 141px; gap: 4px; padding-left: 5px; white-space: nowrap; overflow: hidden; }
.tabs .tab.on { background: #646464; color: #fff; border: 0; }
.tab span { flex: 1; text-align: left; }
.tab .x { width: 10px; height: 10px; margin-right: 4px; }
.tabs .tab.last { flex: 1; min-width: 0; }
.tabs .step.end { width: 14px; padding-left: 5px; }
.tabs .more { width: 27px; justify-content: center; border: 0; }

.ribbon { display: flex; height: 78px; background: #f0f0f0; border-bottom: 1px solid #8a8a8a; flex: none; }
.group { display: flex; flex-direction: column; border-right: 1px solid #c2c2c2; flex: none; }
.cells { display: grid; grid-auto-flow: column; grid-template-rows: repeat(3, 21px); grid-auto-columns: 1fr; flex: 1; }
.cells button { position: relative; display: flex; align-items: center; gap: 4px; padding-left: 4px; text-align: left; white-space: nowrap; line-height: 9px; min-width: 0; }
.cells button.on { background: #484848; color: #fff; }
.cells .d::after { content: ""; position: absolute; left: 16px; bottom: 2px; border-left: 5px solid transparent; border-bottom: 5px solid #333; }
.icons button { justify-content: center; padding: 0; }
.cells .tt { font: 700 17px/18px "Liberation Serif", serif; }
.modes { width: 100px; }
.w0 { width: 100px; }
.w1 { width: 101px; }
.w2 { width: 202px; }
.w4 { width: 402px; }
.n2 { width: 44px; }
.n3 { width: 66px; }
.rest { flex: 1; border: 0; }
.group footer { display: flex; align-items: center; gap: 3px; height: 14px; padding: 1px 3px 0; background: #e4e4e4; font-size: 9px; white-space: nowrap; }
.group footer span { flex: 1; text-align: center; }
.grip { width: 5px; height: 8px; }
.chev { width: 8px; height: 8px; margin: auto; }

.work { display: flex; flex: 1; min-height: 0; }
.strip { width: 23px; background: #cacaca; border-right: 1px solid #999; }
.strip button { display: grid; place-items: center; width: 22px; height: 21px; background: #f0f0f0; }
.strip button.on, .sbar .on { background: #484848; color: #fff; }
.side { width: 259px; display: flex; flex-direction: column; background: #f0f0f0; border-right: 1px solid #777; }
.side h2 { display: flex; justify-content: space-between; align-items: center; height: 14px; margin: 0; padding: 0 2px; font: inherit; background: #cacaca; border-bottom: 1px solid #777; }
.side h2 svg { width: 11px; height: 11px; }
.sbar { display: flex; height: 22px; border-bottom: 1px solid #8a8a8a; color: #333; }
.sbar button { display: grid; place-items: center; width: 22px; }
.sbar.low { border-top: 1px solid #999; }
.find { display: flex; align-items: center; height: 21px; background: #fff; border-bottom: 1px solid #777; }
.find svg { width: 12px; height: 12px; }
.find .fn { width: 14px; height: 14px; margin: 0 8px 0 4px; color: #222; }
.find input { margin-left: 4px; flex: 1; }
.treebox { display: flex; height: 505px; padding-top: 2px; }
.tree { flex: 1; display: flex; flex-direction: column; margin: 0 0 5px; padding: 0; list-style: none; color: #1e1e1e; }
.tree li { flex: 1; display: grid; grid-template-columns: 22px 21px 1fr; border-bottom: 1px solid #dedede; }
.tree b { display: grid; place-items: center; background: #e4e4e4; border-bottom: 1px solid #cdcdcd; margin-bottom: -1px; }
.tree p { display: flex; align-items: center; gap: 1px; margin: 0; padding-left: 28px; white-space: nowrap; }
.tree .root p { padding-left: 10px; }
.tree .root .dn { margin-right: 3px; }
.tree .org p { padding-left: 19px; }
.tree .org .rt { margin-right: 3px; color: #333; }
.tree em { width: 7px; height: 7px; margin: 0 2px 0 4px; border-radius: 50%; background: #888; }
.tree .g p { color: #858585; }
.scroll { width: 8px; background: #fff; margin-bottom: 5px; }
.thumb { height: 69%; width: 7px; background: #b8b8b8; }
.blank { flex: 1; border-top: 1px solid #bbb; }

.view { position: relative; flex: 1; min-width: 0; background: linear-gradient(#fff 0%, #fbfff7 12%, #ccff99 100%); overflow: hidden; }
.scene { position: absolute; inset: 0; width: 100%; height: 100%; }
.axis { font: 11px "Liberation Serif", serif; }
.vbar { position: absolute; top: 0; left: 228px; display: flex; height: 21px; background: #f0f0f0; border: 1px solid #999; border-top: 0; color: #333; }
.vbar .hand { width: 12px; height: 20px; background: #e0e0e0; border-right: 1px solid #bbb; }
.vbar button { display: grid; place-items: center; width: 22px; }
.vbar button.ar { width: 18px; }
.vbar button.w { width: 25px; }
.vbar button.ar.s { width: 20px; }
.vbar button.s { border-right: 1px solid #aaa; }
.vbar button.on { background: #484848; color: #fff; }
.vbar svg { width: 15px; height: 15px; }

.vars { position: absolute; top: 103px; right: 0; width: 253px; background: #f0f0f0; border: 1px solid #8a8a8a; border-right: 0; border-bottom-width: 2px; overflow: hidden; }
.vars h3 { display: flex; align-items: center; gap: 4px; height: 11px; margin: 0; padding-left: 2px; font: 9px/11px Roboto, "Noto Sans", sans-serif; background: #e2e2e2; }
.vars h3 svg { width: 5px; height: 10px; }
.vtools { display: flex; height: 22px; align-items: center; }
.vtools button { display: grid; place-items: center; width: 22px; height: 19px; }
.vtools .s { border-right: 1px solid #777; }
.vtools .w { width: 24px; }
.vtools button.fx { display: block; color: #bbb; font: 14px/16px "Liberation Serif", serif; }
.fx sub { font: 10px/1 Roboto, sans-serif; }
.vfind { display: flex; align-items: center; height: 22px; padding-left: 6px; background: #fff; }
.vfind svg { width: 12px; height: 12px; }
.vbody { height: 350px; overflow: hidden; }
.vars table { width: 284px; table-layout: fixed; border-collapse: separate; border-spacing: 0; }
.c1 { width: 35px; }
.c2 { width: 49px; }
.c3 { width: 66px; }
.c4 { width: 67px; }
.c5 { width: 67px; }
.vars th { height: 18px; padding: 0 0 0 3px; font-weight: 400; text-align: left; border-right: 1px solid #bbb; border-bottom: 2px solid #666; }
.vars td { height: 20px; padding: 0 0 0 20px; border-bottom: 1px solid #bbb; color: #222; }
.vars td i { display: inline-block; vertical-align: middle; margin-right: 6px; }
.vars .top td { height: 19px; padding-left: 10px; }
.vars .top i { margin-right: 5px; }
.vars .v td { border-right: 1px solid #bbb; padding: 0 3px; background: #fff; text-align: right; }
.vars .v td:nth-child(2) { text-align: left; }
.vars .v td:nth-child(n+4) { background: #f0f0f0; }
.hscroll { height: 7px; background: #fff; }
.hthumb { width: 71%; height: 100%; background: #b8b8b8; }
.edge { position: absolute; right: 0; bottom: 12px; width: 3px; height: 34px; background: #111; }
```
